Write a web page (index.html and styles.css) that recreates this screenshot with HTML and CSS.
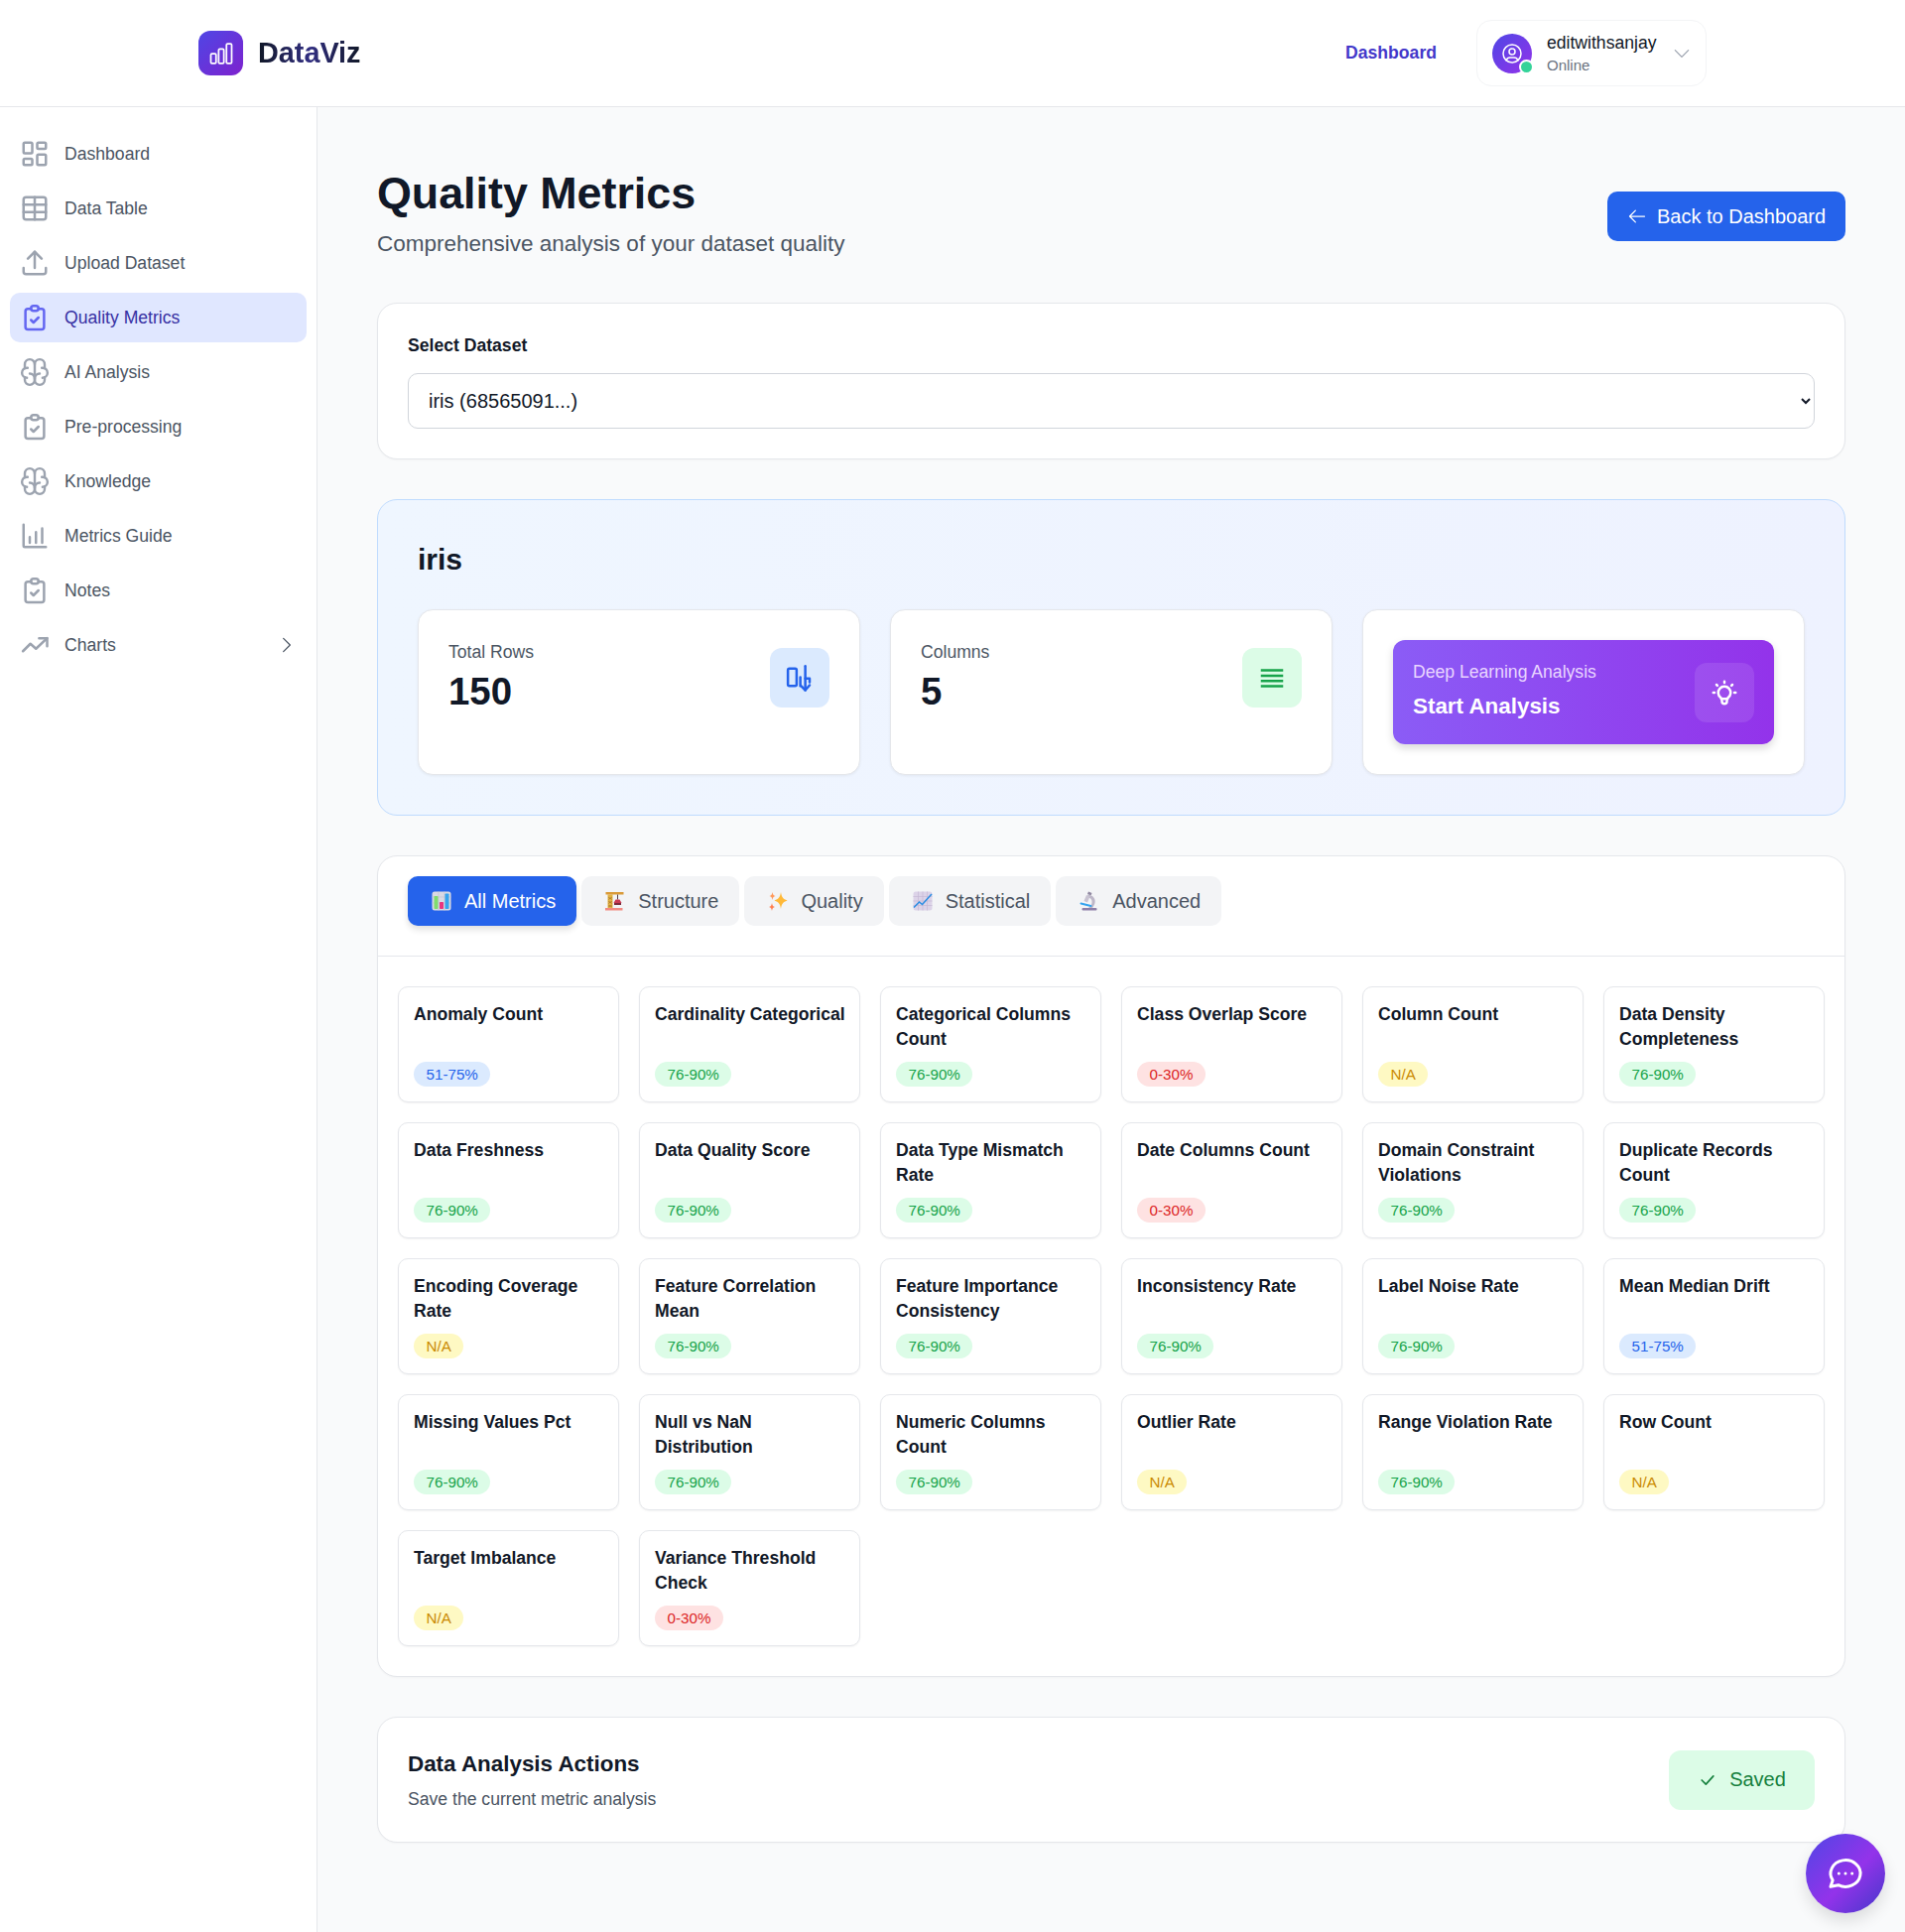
FILE: index.html
```html
<!DOCTYPE html>
<html lang="en">
<head>
  <meta charset="UTF-8">
  <meta name="viewport" content="width=device-width, initial-scale=1.0">
  <title>DataViz - Quality Metrics</title>
  <link rel="stylesheet" href="styles.css">
</head>
<body>
  <header class="topbar">
    <div class="brand">
      <div class="brand-icon">
        <svg viewBox="0 0 24 24" width="28" height="28" fill="none" stroke="#fff" stroke-width="1.5" stroke-linejoin="round"><rect x="3" y="12" width="4.5" height="8.5" rx="1"/><rect x="9.75" y="8" width="4.5" height="12.5" rx="1"/><rect x="16.5" y="3.5" width="4.5" height="17" rx="1"/></svg>
      </div>
      <span class="brand-name">DataViz</span>
    </div>
    <div class="topbar-right">
      <a class="top-link">Dashboard</a>
      <div class="user-box">
        <div class="avatar">
          <svg viewBox="0 0 24 24" width="24" height="24" fill="none" stroke="#fff" stroke-width="1.5" stroke-linecap="round" stroke-linejoin="round"><path d="M3 12a9 9 0 1 0 18 0a9 9 0 1 0 -18 0"/><path d="M9 10a3 3 0 1 0 6 0a3 3 0 1 0 -6 0"/><path d="M6.168 18.849a4 4 0 0 1 3.832 -2.849h4a4 4 0 0 1 3.834 2.855"/></svg>
          <span class="status-dot"></span>
        </div>
        <div class="user-text">
          <div class="user-name">editwithsanjay</div>
          <div class="user-status">Online</div>
        </div>
        <svg class="user-caret" viewBox="0 0 24 24" width="20" height="20" fill="none" stroke="#9ca3af" stroke-width="1.5" stroke-linecap="round" stroke-linejoin="round"><path d="M4 8l8 8l8 -8"/></svg>
      </div>
    </div>
  </header>

  <div class="layout">
    <aside class="sidebar">
      <a class="nav-item">
        <svg class="nav-icon" viewBox="0 0 24 24"><rect x="3" y="3" width="7" height="8.500" rx="1"/><rect x="3" y="16" width="7" height="5" rx="1"/><rect x="14" y="3" width="7" height="5" rx="1"/><rect x="14" y="12.500" width="7" height="8.500" rx="1"/></svg>
        <span>Dashboard</span>
      </a>
      <a class="nav-item">
        <svg class="nav-icon" viewBox="0 0 24 24"><rect x="3" y="3" width="18" height="18" rx="2"/><path d="M3 9h18M3 15h18M12 3v18"/></svg>
        <span>Data Table</span>
      </a>
      <a class="nav-item">
        <svg class="nav-icon" viewBox="0 0 24 24"><path d="M3 16v3a2 2 0 0 0 2 2h14a2 2 0 0 0 2 -2v-3"/><path d="M6.500 8.500l5.500 -5.500l5.500 5.500"/><path d="M12 3v13"/></svg>
        <span>Upload Dataset</span>
      </a>
      <a class="nav-item active">
        <svg class="nav-icon" viewBox="0 0 24 24"><path d="M9 5h-2.500a2 2 0 0 0 -2 2v12.500a2 2 0 0 0 2 2h11a2 2 0 0 0 2 -2v-12.500a2 2 0 0 0 -2 -2h-2.500"/><path d="M11 2.500h2a2 2 0 0 1 0 4h-2a2 2 0 0 1 0 -4z"/><path d="M9 14l2 2l4 -4"/></svg>
        <span>Quality Metrics</span>
      </a>
      <a class="nav-item">
        <svg class="nav-icon brain" viewBox="1.500 1.500 21 21"><path d="M15.500 13a3.500 3.500 0 0 0 -3.500 3.500v1a3.500 3.500 0 0 0 7 0v-1.800"/><path d="M8.500 13a3.500 3.500 0 0 1 3.500 3.500v1a3.500 3.500 0 0 1 -7 0v-1.800"/><path d="M17.500 16a3.500 3.500 0 0 0 0 -7h-.5"/><path d="M19 9.300v-2.800a3.500 3.500 0 0 0 -7 0"/><path d="M6.500 16a3.500 3.500 0 0 1 0 -7h.5"/><path d="M5 9.300v-2.800a3.500 3.500 0 0 1 7 0v10"/></svg>
        <span>AI Analysis</span>
      </a>
      <a class="nav-item">
        <svg class="nav-icon" viewBox="0 0 24 24"><path d="M9 5h-2.500a2 2 0 0 0 -2 2v12.500a2 2 0 0 0 2 2h11a2 2 0 0 0 2 -2v-12.500a2 2 0 0 0 -2 -2h-2.500"/><path d="M11 2.500h2a2 2 0 0 1 0 4h-2a2 2 0 0 1 0 -4z"/><path d="M9 14l2 2l4 -4"/></svg>
        <span>Pre-processing</span>
      </a>
      <a class="nav-item">
        <svg class="nav-icon brain" viewBox="1.500 1.500 21 21"><path d="M15.500 13a3.500 3.500 0 0 0 -3.500 3.500v1a3.500 3.500 0 0 0 7 0v-1.800"/><path d="M8.500 13a3.500 3.500 0 0 1 3.500 3.500v1a3.500 3.500 0 0 1 -7 0v-1.800"/><path d="M17.500 16a3.500 3.500 0 0 0 0 -7h-.5"/><path d="M19 9.300v-2.800a3.500 3.500 0 0 0 -7 0"/><path d="M6.500 16a3.500 3.500 0 0 1 0 -7h.5"/><path d="M5 9.300v-2.800a3.500 3.500 0 0 1 7 0v10"/></svg>
        <span>Knowledge</span>
      </a>
      <a class="nav-item">
        <svg class="nav-icon" viewBox="0 0 24 24"><path d="M3 3v17a1 1 0 0 0 1 1h17"/><path d="M8 17.500v-4.500M13 17.500v-8.500M18 17.500v-11.500"/></svg>
        <span>Metrics Guide</span>
      </a>
      <a class="nav-item">
        <svg class="nav-icon" viewBox="0 0 24 24"><path d="M9 5h-2.500a2 2 0 0 0 -2 2v12.500a2 2 0 0 0 2 2h11a2 2 0 0 0 2 -2v-12.500a2 2 0 0 0 -2 -2h-2.500"/><path d="M11 2.500h2a2 2 0 0 1 0 4h-2a2 2 0 0 1 0 -4z"/><path d="M9 14l2 2l4 -4"/></svg>
        <span>Notes</span>
      </a>
      <a class="nav-item">
        <svg class="nav-icon" viewBox="0 0 24 24"><path d="M2.500 17l6 -6l4.500 4l9 -8.500"/><path d="M15.500 6.500h6.500v6.500"/></svg>
        <span>Charts</span>
        <svg class="nav-caret" viewBox="0 0 24 24" width="20" height="20" fill="none" stroke="#4b5563" stroke-width="1.5" stroke-linecap="round" stroke-linejoin="round"><path d="M8 4l8 8l-8 8"/></svg>
      </a>
    </aside>

    <main class="content">
      <div class="page-head">
        <div>
          <h1 class="page-title">Quality Metrics</h1>
          <p class="page-sub">Comprehensive analysis of your dataset quality</p>
        </div>
        <button class="btn-back">
          <svg viewBox="0 0 24 24" width="20" height="20" fill="none" stroke="#fff" stroke-width="1.5" stroke-linecap="round" stroke-linejoin="round"><path d="M21 12H3.500M10 5l-7 7l7 7"/></svg>
          Back to Dashboard
        </button>
      </div>

      <section class="card select-card">
        <label class="select-label">Select Dataset</label>
        <select class="dataset-select">
          <option>iris (68565091...)</option>
        </select>
      </section>

      <section class="info-panel">
        <h2 class="info-title">iris</h2>
        <div class="info-grid">
          <div class="stat-card">
            <div class="stat-row">
              <div>
                <div class="stat-label">Total Rows</div>
                <div class="stat-value">150</div>
              </div>
              <div class="stat-icon blue">
                <svg viewBox="0 0 24 24" width="30" height="30" fill="none" stroke="#2563eb" stroke-width="2" stroke-linecap="round" stroke-linejoin="round"><rect x="2.500" y="4.500" width="7" height="14" rx="1.200"/><path d="M12.500 18.500v-7"/><path d="M16.500 2.500v19.500"/><path d="M13 18.500l3.500 3.500l3.500 -4"/><path d="M16.500 12.500h3.500v3"/></svg>
              </div>
            </div>
          </div>
          <div class="stat-card">
            <div class="stat-row">
              <div>
                <div class="stat-label">Columns</div>
                <div class="stat-value">5</div>
              </div>
              <div class="stat-icon green">
                <svg viewBox="0 0 24 24" width="30" height="30" fill="none" stroke="#16a34a" stroke-width="2"><path d="M3 6h18M3 10.300h18M3 14.500h18M3 18.800h18"/></svg>
              </div>
            </div>
          </div>
          <div class="stat-card">
            <div class="dl-card">
              <div class="dl-text">
                <div class="dl-label">Deep Learning Analysis</div>
                <div class="dl-action">Start Analysis</div>
              </div>
              <div class="dl-icon">
                <svg viewBox="0 0 24 24" width="30" height="30" fill="none" stroke="#fff" stroke-width="2" stroke-linecap="round" stroke-linejoin="round"><path d="M3 12h1m8 -9v1m8 8h1m-15.400 -6.400l.7 .7m12.100 -.7l-.7 .7"/><path d="M9 16a5 5 0 1 1 6 0a3.500 3.500 0 0 0 -1 3a2 2 0 0 1 -4 0a3.500 3.500 0 0 0 -1 -3"/><path d="M9.700 17h4.600"/></svg>
              </div>
            </div>
          </div>
        </div>
      </section>

      <section class="card metrics-card">
        <div class="tabs">
          <button class="tab active">
            <svg class="tab-icon" viewBox="0 0 20 20"><rect x="0.500" y="0.500" width="19" height="19" rx="2.500" fill="#d9d9e3"/><path d="M0.500 6h19M0.500 12h19M7 0.500v19M13 0.500v19" stroke="#c4c4d2" stroke-width="0.700"/><rect x="2.500" y="5" width="4" height="13" rx="0.800" fill="#7fdc6e"/><rect x="8" y="11" width="4" height="7" rx="0.800" fill="#e8357f"/><rect x="13.500" y="2.500" width="4" height="15.500" rx="0.800" fill="#35a4ee"/></svg>
            All Metrics
          </button>
          <button class="tab">
            <svg class="tab-icon" viewBox="0 0 20 20"><path d="M2.500 3.500h5v14h-5z" fill="#e3b341"/><path d="M3 6l4 2.500M7 6l-4 2.500M3 10l4 2.500M7 10l-4 2.500M3 14l4 2M7 14l-4 2" stroke="#a9752b" stroke-width="0.700"/><rect x="0.500" y="1" width="18" height="2.500" fill="#d99a38"/><path d="M12.500 3.500v5" stroke="#55404a" stroke-width="1"/><path d="M10.500 8.500h4l2 3.500h-8z" fill="#c93a52"/><rect x="9" y="12" width="7" height="2" fill="#7d2b3c"/><rect x="0" y="17" width="17.500" height="2.500" fill="#f28b82"/></svg>
            Structure
          </button>
          <button class="tab">
            <svg class="tab-icon" viewBox="0 0 20 20"><path d="M13 1c.8 5 2 6.800 6.500 8.500c-4.500 1.700-5.700 3.500-6.500 8.500c-.8-5-2-6.800-6.500-8.500c4.500-1.700 5.700-3.500 6.500-8.500z" fill="#ffb938"/><path d="M4.500 1c.4 2.500 1 3.300 3 4c-2 .7-2.600 1.500-3 4c-.4-2.500-1-3.300-3-4c2-.7 2.600-1.500 3-4z" fill="#ff9a5c"/><path d="M4 12c.4 2.500 1 3.300 3 4c-2 .7-2.600 1.500-3 4c-.4-2.500-1-3.300-3-4c2-.7 2.600-1.500 3-4z" fill="#ff7f50"/></svg>
            Quality
          </button>
          <button class="tab">
            <svg class="tab-icon" viewBox="0 0 20 20"><rect x="0.500" y="0.500" width="19" height="19" rx="2.500" fill="#dcd3e8"/><path d="M0.500 5.500h19M0.500 10h19M0.500 14.500h19M5.500 0.500v19M10 0.500v19M14.500 0.500v19" stroke="#c5b9d6" stroke-width="0.700"/><path d="M1 16.500l5.500 -5.500l3 2.500l9.500 -10.500" fill="none" stroke="#2f8fe3" stroke-width="1.600"/></svg>
            Statistical
          </button>
          <button class="tab">
            <svg class="tab-icon" viewBox="0 0 20 20"><path d="M9 0.500l3.500 1.500l-1 2.500l-3.500 -1.500z" fill="#8f87a0"/><path d="M8 3.500c6 .5 8.500 4.500 7.500 8.500c-.4 1.700-1.500 3.500-2.500 5h-4c2.500-2 4-4 3.500-7c-.3-1.800-1.500-3-3.500-3.500z" fill="#bdb7c8"/><path d="M7 4l3.500 1.500l-2.500 6l-3.500 -1.500z" fill="#c8c3d2"/><path d="M1.500 12.500l10 2.500" stroke="#35a4ee" stroke-width="2" stroke-linecap="round"/><rect x="2.500" y="17" width="15" height="2.500" rx="1" fill="#8d7fa8"/></svg>
            Advanced
          </button>
        </div>
        <div class="metric-grid">
          <div class="metric"><div class="metric-name">Anomaly Count</div><span class="badge b-blue">51-75%</span></div>
          <div class="metric"><div class="metric-name">Cardinality Categorical</div><span class="badge b-green">76-90%</span></div>
          <div class="metric"><div class="metric-name">Categorical Columns Count</div><span class="badge b-green">76-90%</span></div>
          <div class="metric"><div class="metric-name">Class Overlap Score</div><span class="badge b-red">0-30%</span></div>
          <div class="metric"><div class="metric-name">Column Count</div><span class="badge b-yellow">N/A</span></div>
          <div class="metric"><div class="metric-name">Data Density Completeness</div><span class="badge b-green">76-90%</span></div>

          <div class="metric"><div class="metric-name">Data Freshness</div><span class="badge b-green">76-90%</span></div>
          <div class="metric"><div class="metric-name">Data Quality Score</div><span class="badge b-green">76-90%</span></div>
          <div class="metric"><div class="metric-name">Data Type Mismatch Rate</div><span class="badge b-green">76-90%</span></div>
          <div class="metric"><div class="metric-name">Date Columns Count</div><span class="badge b-red">0-30%</span></div>
          <div class="metric"><div class="metric-name">Domain Constraint Violations</div><span class="badge b-green">76-90%</span></div>
          <div class="metric"><div class="metric-name">Duplicate Records Count</div><span class="badge b-green">76-90%</span></div>

          <div class="metric"><div class="metric-name">Encoding Coverage Rate</div><span class="badge b-yellow">N/A</span></div>
          <div class="metric"><div class="metric-name">Feature Correlation Mean</div><span class="badge b-green">76-90%</span></div>
          <div class="metric"><div class="metric-name">Feature Importance Consistency</div><span class="badge b-green">76-90%</span></div>
          <div class="metric"><div class="metric-name">Inconsistency Rate</div><span class="badge b-green">76-90%</span></div>
          <div class="metric"><div class="metric-name">Label Noise Rate</div><span class="badge b-green">76-90%</span></div>
          <div class="metric"><div class="metric-name">Mean Median Drift</div><span class="badge b-blue">51-75%</span></div>

          <div class="metric"><div class="metric-name">Missing Values Pct</div><span class="badge b-green">76-90%</span></div>
          <div class="metric"><div class="metric-name">Null vs NaN Distribution</div><span class="badge b-green">76-90%</span></div>
          <div class="metric"><div class="metric-name">Numeric Columns Count</div><span class="badge b-green">76-90%</span></div>
          <div class="metric"><div class="metric-name">Outlier Rate</div><span class="badge b-yellow">N/A</span></div>
          <div class="metric"><div class="metric-name">Range Violation Rate</div><span class="badge b-green">76-90%</span></div>
          <div class="metric"><div class="metric-name">Row Count</div><span class="badge b-yellow">N/A</span></div>

          <div class="metric"><div class="metric-name">Target Imbalance</div><span class="badge b-yellow">N/A</span></div>
          <div class="metric"><div class="metric-name">Variance Threshold Check</div><span class="badge b-red">0-30%</span></div>
        </div>
      </section>

      <section class="card actions-card">
        <div>
          <h3 class="actions-title">Data Analysis Actions</h3>
          <p class="actions-sub">Save the current metric analysis</p>
        </div>
        <button class="btn-saved">
          <svg viewBox="0 0 24 24" width="20" height="20" fill="none" stroke="#15803d" stroke-width="2" stroke-linecap="round" stroke-linejoin="round"><path d="M5 12l5 5l9 -10"/></svg>
          Saved
        </button>
      </section>
    </main>
  </div>

  <button class="chat-fab">
    <svg viewBox="0 0 24 24" width="40" height="40" fill="none" stroke="#fff" stroke-width="1.800" stroke-linecap="round" stroke-linejoin="round"><path d="M3 20l1.300 -3.900a9 8 0 1 1 3.400 2.900l-4.700 1"/><path d="M12 12v.01M8 12v.01M16 12v.01"/></svg>
  </button>
</body>
</html>
```

FILE: styles.css
```css
* {
  box-sizing: border-box;
}

body {
  margin: 0;
  font-family: "Liberation Sans", Arial, sans-serif;
  font-size: 17.6px;
  line-height: 1.5;
  color: #111827;
  background-color: #f9fafb;
}

/* Barra superior */
.topbar {
  height: 108px;
  padding: 0 200px;
  display: flex;
  align-items: center;
  justify-content: space-between;
  background-color: #fff;
  border-bottom: 1px solid #e5e7eb;
}

.brand {
  display: flex;
  align-items: center;
  gap: 15px;
}

.brand-icon {
  width: 45px;
  height: 45px;
  border-radius: 12px;
  display: flex;
  align-items: center;
  justify-content: center;
  background: linear-gradient(135deg, #4f46e5, #7e22ce);
}

.brand-name {
  font-size: 28.8px;
  font-weight: 700;
  line-height: 1.2;
  background: linear-gradient(90deg, #111827, #312e81, #111827);
  -webkit-background-clip: text;
  background-clip: text;
  color: transparent;
}

.topbar-right {
  display: flex;
  align-items: center;
  gap: 40px;
}

.top-link {
  font-weight: 700;
  color: #4338ca;
}

.user-box {
  width: 232px;
  height: 67px;
  padding: 0 15px;
  display: flex;
  align-items: center;
  gap: 15px;
  border: 1px solid #f3f4f6;
  border-radius: 15px;
  background-color: #fff;
}

.avatar {
  position: relative;
  flex: none;
  width: 40px;
  height: 40px;
  border-radius: 50%;
  display: flex;
  align-items: center;
  justify-content: center;
  background: linear-gradient(135deg, #4f46e5, #9333ea);
}

.status-dot {
  position: absolute;
  right: -2px;
  bottom: -1px;
  width: 15px;
  height: 15px;
  border: 2px solid #fff;
  border-radius: 50%;
  background-color: #34d399;
}

.user-text {
  flex: 1;
}

.user-name {
  line-height: 23px;
}

.user-status {
  font-size: 15px;
  line-height: 21px;
  color: #6b7280;
}

.user-caret {
  flex: none;
}

/* Menu lateral */
.layout {
  display: flex;
  min-height: 1839px;
}

.sidebar {
  flex: none;
  width: 320px;
  padding: 22px 10px;
  background-color: #fff;
  border-right: 1px solid #e5e7eb;
}

.nav-item {
  height: 50px;
  margin-bottom: 5px;
  padding: 0 10px;
  display: flex;
  align-items: center;
  gap: 15px;
  border-radius: 10px;
  color: #4b5563;
}

.nav-icon {
  flex: none;
  width: 30px;
  height: 30px;
  fill: none;
  stroke: #9ca3af;
  stroke-width: 2;
  stroke-linecap: round;
  stroke-linejoin: round;
}

.nav-icon.brain {
  stroke-width: 1.7;
}

.nav-caret {
  margin-left: auto;
}

.nav-item.active {
  background-color: #e0e7ff;
  color: #3730a3;
}

.nav-item.active .nav-icon {
  stroke: #6366f1;
}

/* Conteudo */
.content {
  flex: 1;
  min-width: 0;
  padding: 60px 60px 50px;
}

.page-head {
  height: 100px;
  display: flex;
  align-items: center;
  justify-content: space-between;
  margin-bottom: 37px;
}

.page-title {
  margin: 0;
  font-size: 44.8px;
  font-weight: 700;
  line-height: 52px;
}

.page-sub {
  margin: 10px 0 6px;
  font-size: 22.5px;
  line-height: 32px;
  color: #4b5563;
}

.btn-back {
  width: 240px;
  height: 50px;
  display: flex;
  align-items: center;
  justify-content: center;
  gap: 10px;
  border: 0;
  border-radius: 10px;
  font-family: inherit;
  font-size: 20px;
  color: #fff;
  background-color: #2563eb;
}

.card {
  background-color: #fff;
  border: 1px solid #e5e7eb;
  border-radius: 20px;
  box-shadow: 0 1px 2px rgba(0, 0, 0, 0.03);
}

.select-card {
  padding: 30px;
  margin-bottom: 40px;
}

.select-label {
  display: block;
  margin-bottom: 15px;
  font-weight: 700;
  line-height: 25px;
  color: #111827;
}

.dataset-select {
  display: block;
  width: 100%;
  height: 56px;
  padding: 0 18px 0 16px;
  border: 1px solid #d1d5db;
  border-radius: 10px;
  font-family: inherit;
  font-size: 20px;
  color: #111827;
  background-color: #fff;
}

/* Painel do dataset */
.info-panel {
  padding: 40px;
  margin-bottom: 40px;
  border: 1px solid #bfdbfe;
  border-radius: 20px;
  background: linear-gradient(90deg, #eff6ff, #eef2ff);
}

.info-title {
  margin: 0 0 30px;
  font-size: 30px;
  font-weight: 700;
  line-height: 40px;
}

.info-grid {
  display: grid;
  grid-template-columns: repeat(3, 1fr);
  gap: 30px;
}

.stat-card {
  padding: 30px;
  border: 1px solid #e5e7eb;
  border-radius: 15px;
  background-color: #fff;
  box-shadow: 0 1px 3px rgba(0, 0, 0, 0.06);
}

.stat-row {
  display: flex;
  align-items: flex-start;
  justify-content: space-between;
}

.stat-label {
  margin-bottom: 3px;
  line-height: 24px;
  color: #4b5563;
}

.stat-value {
  font-size: 38.4px;
  font-weight: 700;
  line-height: 50px;
}

.stat-icon {
  width: 60px;
  height: 60px;
  margin-top: 8px;
  border-radius: 12px;
  display: flex;
  align-items: center;
  justify-content: center;
}

.stat-icon.blue {
  background-color: #dbeafe;
}

.stat-icon.green {
  background-color: #dcfce7;
}

.dl-card {
  padding: 20px;
  display: flex;
  align-items: center;
  justify-content: space-between;
  border-radius: 12px;
  color: #fff;
  background: linear-gradient(90deg, #8b5cf6, #9333ea);
  box-shadow: 0 4px 8px rgba(0, 0, 0, 0.15);
}

.dl-label {
  line-height: 24px;
  margin-bottom: 5px;
  color: #e9d5ff;
}

.dl-action {
  font-size: 22.4px;
  font-weight: 700;
  line-height: 36px;
}

.dl-icon {
  width: 60px;
  height: 60px;
  border-radius: 12px;
  display: flex;
  align-items: center;
  justify-content: center;
  background-color: rgba(255, 255, 255, 0.1);
}

/* Metricas */
.metrics-card {
  margin-bottom: 40px;
}

.tabs {
  padding: 20px 30px 30px;
  display: flex;
  gap: 5px;
  border-bottom: 1px solid #e5e7eb;
}

.tab {
  height: 50px;
  padding: 0 21px 0 20px;
  display: flex;
  align-items: center;
  border: 0;
  border-radius: 10px;
  font-family: inherit;
  font-size: 20px;
  color: #4b5563;
  background-color: #f3f4f6;
}

.tab.active {
  color: #fff;
  background-color: #2563eb;
  box-shadow: 0 4px 6px rgba(0, 0, 0, 0.12);
}

.tab-icon {
  flex: none;
  width: 20px;
  height: 20px;
  margin: 0 13px 0 4px;
}

.metric-grid {
  padding: 30px 20px;
  display: grid;
  grid-template-columns: repeat(6, 1fr);
  gap: 20px;
}

.metric {
  height: 117px;
  padding: 15px 10px 15px 15px;
  border: 1px solid #e5e7eb;
  border-radius: 10px;
  background-color: #fff;
  box-shadow: 0 1px 2px rgba(0, 0, 0, 0.05);
}

.metric-name {
  height: 50px;
  margin-bottom: 9px;
  font-weight: 700;
  line-height: 25px;
  color: #111827;
}

.badge {
  display: inline-block;
  height: 25px;
  padding: 0 12.5px;
  border-radius: 999px;
  font-size: 15.2px;
  line-height: 25px;
}

.b-blue {
  color: #2563eb;
  background-color: #dbeafe;
}

.b-green {
  color: #16a34a;
  background-color: #dcfce7;
}

.b-red {
  color: #dc2626;
  background-color: #fee2e2;
}

.b-yellow {
  color: #ca8a04;
  background-color: #fef9c3;
}

/* Acoes */
.actions-card {
  padding: 30px;
  display: flex;
  align-items: center;
  justify-content: space-between;
}

.actions-title {
  margin: 0 0 6px;
  font-size: 22.4px;
  font-weight: 700;
  line-height: 33px;
}

.actions-sub {
  margin: 0;
  line-height: 26px;
  color: #4b5563;
}

.btn-saved {
  width: 147px;
  height: 60px;
  display: flex;
  align-items: center;
  justify-content: center;
  gap: 12px;
  border: 0;
  border-radius: 12px;
  font-family: inherit;
  font-size: 20px;
  color: #15803d;
  background-color: #dcfce7;
}

.chat-fab {
  position: absolute;
  right: 20px;
  top: 1848px;
  width: 80px;
  height: 80px;
  display: flex;
  align-items: center;
  justify-content: center;
  border: 0;
  border-radius: 50%;
  background: linear-gradient(135deg, #4f46e5, #9333ea 55%, #4338ca);
  box-shadow: 0 8px 16px rgba(0, 0, 0, 0.12);
}
```
